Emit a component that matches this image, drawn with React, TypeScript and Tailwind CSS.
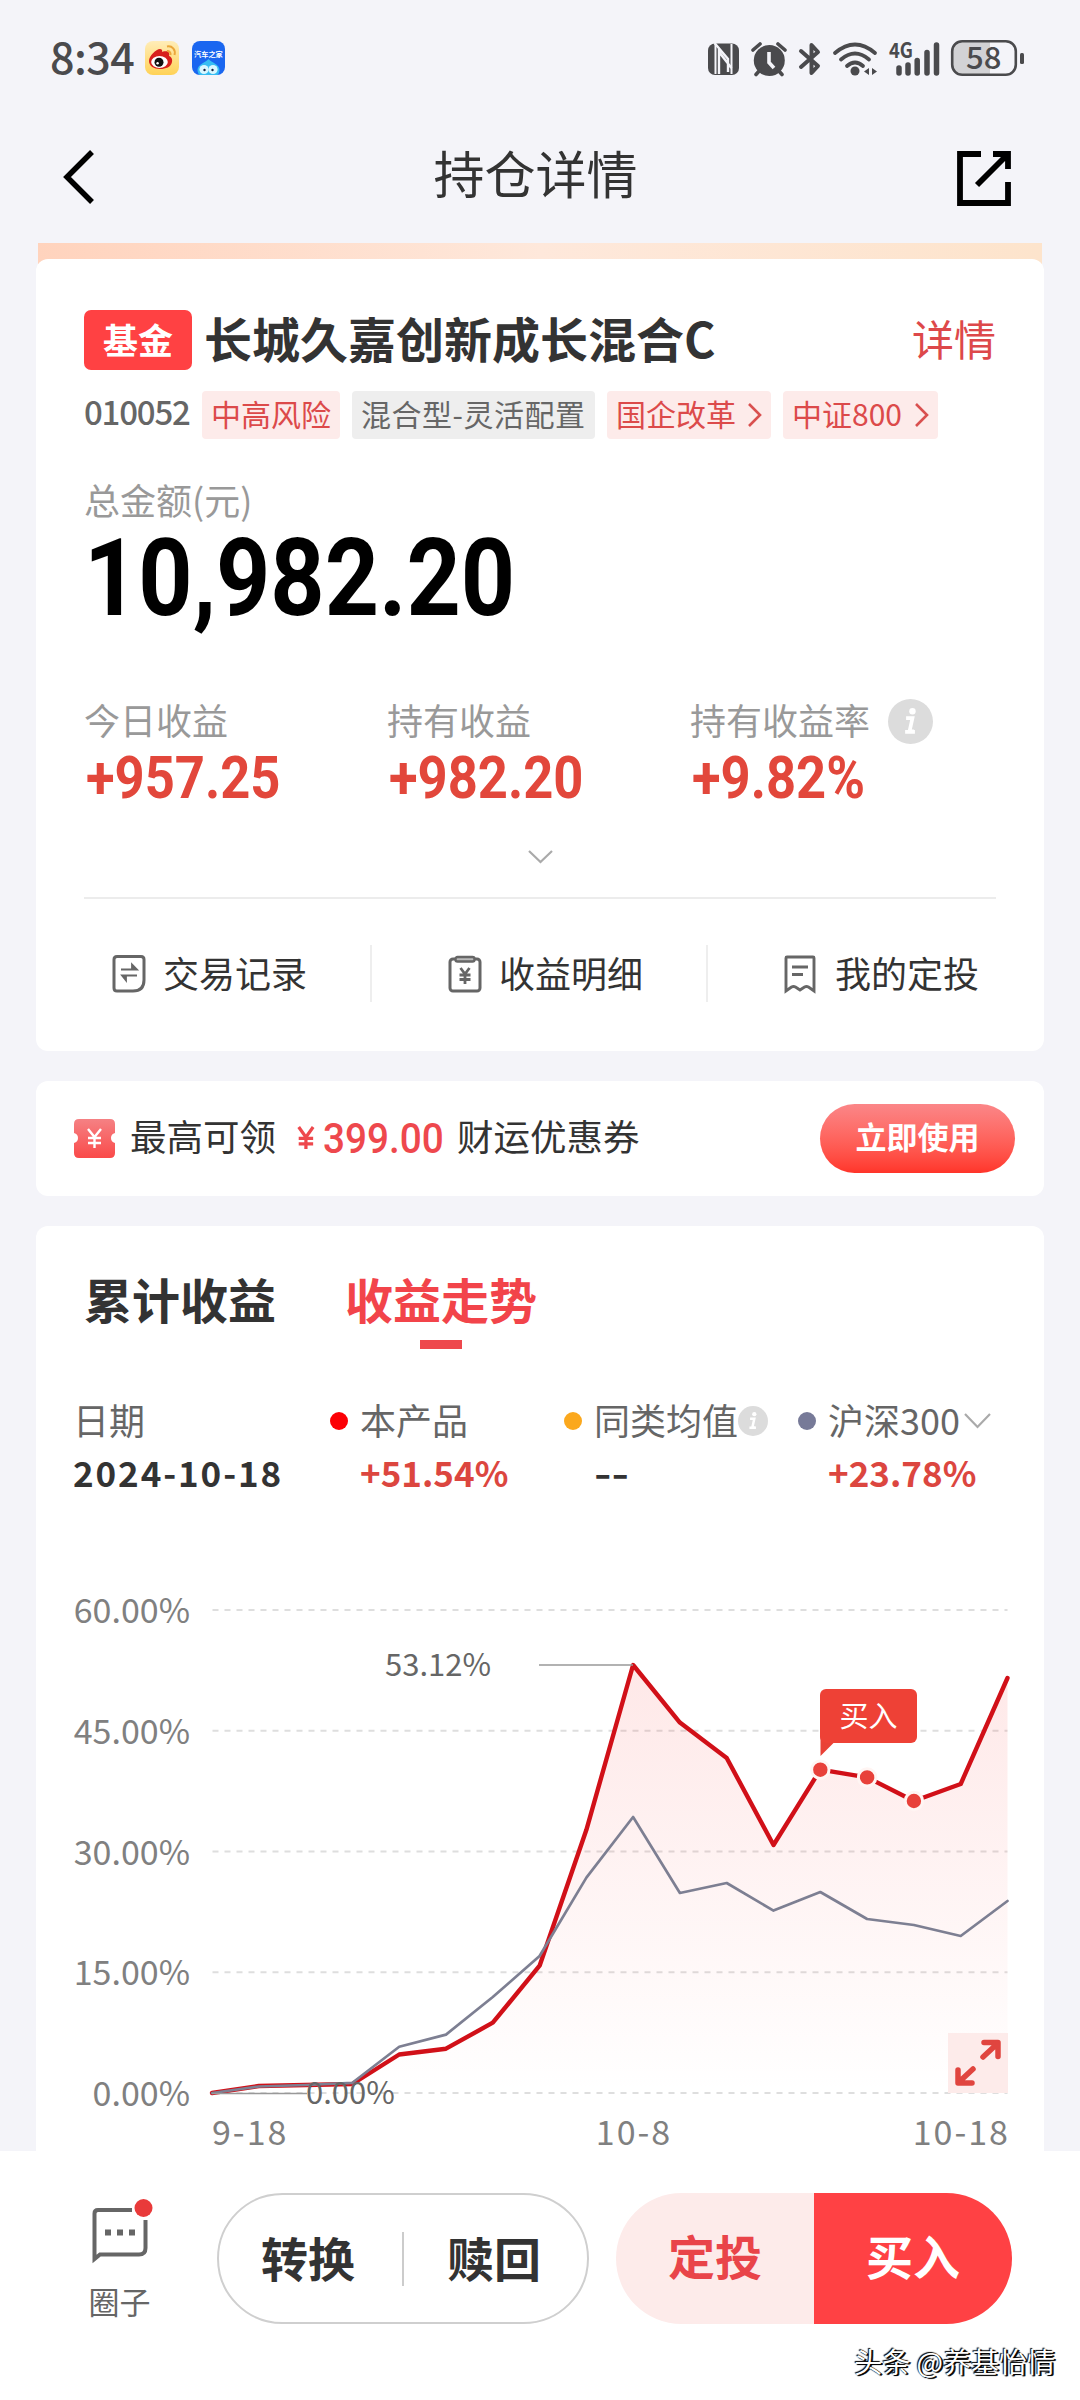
import React from "react";
import clsx from "clsx";

type Stat = { label: string; value: string; info?: boolean };

const STATS: Stat[] = [
	{ label: "今日收益", value: "+957.25" },
	{ label: "持有收益", value: "+982.20" },
	{ label: "持有收益率", value: "+9.82%", info: true },
];

// y pixel values inside the plot, 0 is the 60% line and 483 is the 0% line
const PRODUCT = [483, 476, 475, 474, 444.5, 438.7, 412.7, 355.7, 219.8, 55, 112.6, 148, 235, 159.7, 167.4, 191, 174, 68];
const INDEX = [483, 476.5, 475, 472.8, 436.8, 424.6, 387, 346, 267.6, 207, 283, 273, 300.6, 282, 309, 315, 326, 291];
const STEP = 795.5 / 17;
const TICKS = ["60.00%", "45.00%", "30.00%", "15.00%", "0.00%"];

const toPoints = (ys: number[]) => ys.map((y, i) => `${(i * STEP).toFixed(1)},${y}`).join(" ");

function Digits({ children, className }: { children: React.ReactNode; className?: string }) {
	return (
		<span className={clsx("block origin-left whitespace-nowrap font-['Roboto',sans-serif] leading-none", className)}>
			{children}
		</span>
	);
}

function InfoIcon({ size }: { size: number }) {
	return (
		<svg width={size} height={size} viewBox="0 0 46 46" className="shrink-0">
			<circle cx="23" cy="23" r="23" fill="#dcdcdc" />
			<circle cx="25" cy="12.500" r="3.300" fill="#fff" />
			<path d="M18.500 19.500h6.500l-3 13.500h4.500M17.500 33.500h10" fill="none" stroke="#fff" strokeWidth="3.800" />
		</svg>
	);
}

function StatusBar() {
	return (
		<div className="flex h-[116px] items-center pl-[50px] pr-[56px] text-[#4a4a4d]">
			<span className="mb-[6px] w-[95px] text-[43px] font-medium leading-none tracking-[-0.5px]">8:34</span>
			<svg width="34" height="34" viewBox="0 0 34 34">
				<defs>
					<linearGradient id="weibo" x1="0" y1="0" x2="0" y2="1">
						<stop offset="0" stopColor="#ffedb8" />
						<stop offset="1" stopColor="#ffd257" />
					</linearGradient>
				</defs>
				<rect width="34" height="34" rx="8" fill="url(#weibo)" />
				<path d="M15 8c3 0 2 3 2 3s6-2 7 1c.6 2 0 3 0 3s4 1 3 6-6 7-12 7S4 25 4 20 11 8 15 8Z" fill="#d7201c" />
				<ellipse cx="14.500" cy="21" rx="8.300" ry="6" fill="#fff" />
				<circle cx="14" cy="21.300" r="4.500" fill="#111" />
				<circle cx="12.600" cy="22.300" r="1.200" fill="#fff" />
				<path d="M22 5.500c5-1 9 3 7.500 8.500M22 10c2-.5 4 1.500 3.500 4" fill="none" stroke="#eba63a" strokeWidth="2" />
			</svg>
			<div className="relative ml-[13px] h-[34px] w-[33px] overflow-hidden rounded-[8px] bg-[#1a66f0]">
				<svg width="33" height="34" viewBox="0 0 33 34" className="absolute inset-0">
					<path d="M16.500 18c2 3 11 5 11 11 0 3-2 5-2 5h-18s-2-2-2-5c0-6 9-8 11-11Z" fill="#36bdf3" />
					<circle cx="12" cy="28.500" r="4.600" fill="#d9f7ff" />
					<circle cx="21" cy="28.500" r="4.600" fill="#d9f7ff" />
					<circle cx="12.500" cy="29" r="1.200" fill="#124" />
					<circle cx="20.500" cy="29" r="1.200" fill="#124" />
				</svg>
				<span className="absolute left-[2px] top-[10px] origin-top-left scale-[0.72] whitespace-nowrap text-[10px] font-bold leading-none text-white">
					汽车之家
				</span>
			</div>
			<svg width="317" height="44" viewBox="707 34 317 44" className="ml-auto overflow-visible">
				<g fill="#4a4a4d">
					<rect x="708" y="41.500" width="31" height="31.500" rx="7" />
					<path d="M715.500 42v30M731.500 42v30" stroke="#f4f4f9" strokeWidth="2" />
					<path d="M714.500 41l13.500 16v13M719 72V50l12.500 16" fill="none" stroke="#f4f4f9" strokeWidth="2.400" />
					<circle cx="769.300" cy="58.500" r="15.500" />
					<path d="M760 68l-4 4.500M778 68l4 4.500M753 48l7-6M785 48l-7-6" stroke="#4a4a4d" strokeWidth="3.600" strokeLinecap="round" />
					<path d="M769 50v10.500l5 5.500" fill="none" stroke="#f4f4f9" strokeWidth="3.600" />
					<path d="M801 49l17 15-6.500 7V43l6.500 7-17 15" fill="none" stroke="#4a4a4d" strokeWidth="4" strokeLinecap="round" strokeLinejoin="round" />
					<path d="M835 51q20-17 40 0M841 57.500q14-12 28 0M847 64q8-7 16 0" fill="none" stroke="#4a4a4d" strokeWidth="3.800" strokeLinecap="round" />
					<circle cx="855" cy="69" r="4.500" />
					<path d="M869 66v7l-5-3.500ZM872 66v7l5-3.500Z" />
					<path d="M899 66v5M908 63v8M917.200 58.500v12.500M927 50.500v20.500M936.500 43v28" stroke="#4a4a4d" strokeWidth="5.500" strokeLinecap="round" />
					<path d="M961 39.500h29v33h-29q-9 0-9-9v-15q0-9 9-9Z" fill="#d2d2d5" />
					<rect x="952.200" y="39.200" width="63.600" height="33.600" rx="10" fill="none" stroke="#4a4a4d" strokeWidth="2.600" />
					<rect x="1020" y="51" width="4" height="11" rx="1.500" />
				</g>
				<text x="889" y="56" fontSize="21" fontWeight="700" fill="#4a4a4d" textLength="24" lengthAdjust="spacingAndGlyphs">4G</text>
				<text x="966" y="67" fontSize="31" fontWeight="500" fill="#4a4a4d">58</text>
			</svg>
		</div>
	);
}

function Header() {
	return (
		<div className="flex h-[127px] items-start justify-between pl-[62px] pr-[69px]">
			<svg width="56" height="56" viewBox="0 0 56 56" className="mt-[33px]">
				<path d="M30 3L5 28l25 25" fill="none" stroke="#000" strokeWidth="5.500" />
			</svg>
			<h1 className="mr-1 mt-[31px] text-[51px] leading-none text-[#333]">持仓详情</h1>
			<svg width="54" height="56" viewBox="0 0 54 56" className="mt-[35px]">
				<path d="M24 3H3v49h48V31M36 3h15v15M50 4L20 34" fill="none" stroke="#000" strokeWidth="5.800" />
			</svg>
		</div>
	);
}

function Tag({ children, arrow, gray, className }: { children: React.ReactNode; arrow?: boolean; gray?: boolean; className?: string }) {
	return (
		<div
			className={clsx(
				"flex h-12 shrink-0 items-center justify-between whitespace-nowrap rounded-[4px] px-[9px] pb-[5px] text-[30px] leading-none",
				gray ? "bg-[#eeeeee] text-[#666]" : "bg-[#fdebea] text-[#dc4a4a]",
				className
			)}
		>
			<span>{children}</span>
			{arrow && (
				<svg width="15" height="24" viewBox="0 0 15 24" className="mt-1">
					<path d="M2 1l11 11L2 23" fill="none" stroke="#d9504f" strokeWidth="2.600" />
				</svg>
			)}
		</div>
	);
}

function RecordIcon() {
	return (
		<svg width="34" height="40" viewBox="0 0 34 40">
			<path d="M5 2.500h24q3 0 3 3V26q0 11-11 11H5q-3 0-3-3V5.500q0-3 3-3Z" fill="none" stroke="#666" strokeWidth="3" />
			<path d="M9 15.500h16l-5-5v5M25 21.500H10l4 5v-5" fill="#666" stroke="#666" strokeWidth="1.800" />
		</svg>
	);
}

function ClipboardIcon() {
	return (
		<svg width="34" height="40" viewBox="0 0 34 40">
			<rect x="2" y="5" width="30" height="32" rx="3" fill="none" stroke="#666" strokeWidth="3" />
			<rect x="7.500" y="3" width="19" height="4.500" rx="2" fill="#bbb" stroke="#666" strokeWidth="2.400" />
			<path d="M12.500 14l4.500 6 4.500-6M17 20v10M11.500 21h11M11.500 25.500h11" fill="none" stroke="#666" strokeWidth="2.800" />
		</svg>
	);
}

function BookmarkIcon() {
	return (
		<svg width="34" height="40" viewBox="0 0 34 40">
			<path d="M4 3h26q1 0 1 1v33l-5.500-4q-2-1-4 0L17 36l-4.500-3q-2-1-4 0L3 37V4q0-1 1-1Z" fill="none" stroke="#666" strokeWidth="2.900" />
			<path d="M9 13h16M9 20.500h11" stroke="#666" strokeWidth="2.800" />
		</svg>
	);
}

function Holding() {
	return (
		<section className="mx-9 h-[792px] rounded-[12px] bg-white pt-[51px]">
			<div className="flex h-[60px] items-center pl-12 pr-[48px]">
				<div className="flex h-[60px] w-[108px] items-center justify-center rounded-[7px] bg-[#ff4143] pb-1 text-[35px] font-bold leading-none text-white">
					基金
				</div>
				<h2 className="mb-[6px] ml-[12px] text-[48px] font-bold leading-none text-[#333]">长城久嘉创新成长混合C</h2>
				<span className="mb-1 ml-auto text-[42px] leading-none text-[#dd484a]">详情</span>
			</div>
			<div className="mt-[21px] flex h-12 items-center pl-12">
				<span className="mb-[7px] w-[118px] text-[33px] font-medium leading-none tracking-[-1.2px] text-[#666]">010052</span>
				<Tag className="w-[138px]">中高风险</Tag>
				<Tag gray className="ml-3 w-[243px] tracking-[0.5px]">混合型-灵活配置</Tag>
				<Tag arrow className="ml-3 w-[164px]">国企改革</Tag>
				<Tag arrow className="ml-3 w-[155px]">中证800</Tag>
			</div>
			<div className="mt-[42px] pl-12 text-[36px] leading-none text-[#999]">总金额(元)</div>
			<Digits className="ml-12 mt-[7px] scale-x-[0.877] text-[108px] font-bold text-black">10,982.20</Digits>
			<div className="mt-[66px] flex h-[118px] pl-12">
				{STATS.map((s) => (
					<div key={s.label} className="w-[303px] shrink-0">
						<div className="flex h-[46px] items-center text-[36px] leading-none text-[#999]">
							<span className="mb-1 mr-[18px]">{s.label}</span>
							{s.info && <InfoIcon size={45} />}
						</div>
						<Digits className="ml-[2px] mt-[4px] scale-x-[0.875] text-[60px] font-bold text-[#e2473b]">{s.value}</Digits>
					</div>
				))}
			</div>
			<div className="mx-12 flex h-[83px] items-center justify-center border-b-2 border-[#ececec]">
				<svg width="25" height="14" viewBox="0 0 25 14">
					<path d="M1 1l11.500 11L24 1" fill="none" stroke="#aaa" strokeWidth="2.200" />
				</svg>
			</div>
			<div className="mt-[46px] flex h-[57px] text-[36px] leading-none text-[#333]">
				<div className="flex w-[336px] items-center border-r-2 border-[#eee] pl-[76px]">
					<RecordIcon />
					<span className="mb-1 ml-[17px]">交易记录</span>
				</div>
				<div className="flex w-[336px] items-center border-r-2 border-[#eee] pl-[76px]">
					<ClipboardIcon />
					<span className="mb-1 ml-[17px]">收益明细</span>
				</div>
				<div className="flex w-[336px] items-center pl-[75px]">
					<BookmarkIcon />
					<span className="mb-1 ml-[18px]">我的定投</span>
				</div>
			</div>
		</section>
	);
}

function Coupon() {
	return (
		<section className="mx-9 mt-[30px] flex h-[115px] items-center rounded-[12px] bg-white pl-[38px] pr-[29px] text-[36.500px] leading-none text-[#333]">
			<svg width="41" height="39" viewBox="0 0 41 39">
				<defs>
					<linearGradient id="ticket" x1="0" y1="0" x2="0" y2="1">
						<stop offset="0" stopColor="#f58184" />
						<stop offset="1" stopColor="#fa4a49" />
					</linearGradient>
				</defs>
				<path d="M5 0h31q5 0 5 5v9q-4 1-4 5t4 5v10q0 5-5 5H5q-5 0-5-5V24q4-1 4-5t-4-5V5q0-5 5-5Z" fill="url(#ticket)" />
				<path d="M14 10l6.500 8 6.500-8M20.500 18v11M14 19h13M14 24h13" fill="none" stroke="#fff" strokeWidth="2.400" />
			</svg>
			<span className="mb-1 ml-[15px] w-[167px]">最高可领</span>
			<span className="mb-1 flex w-[160px] items-center whitespace-nowrap text-[#ee484d]">
				<svg width="21" height="28" viewBox="0 0 21 28" className="mr-[8px] mt-[2px]">
					<path d="M2 1l8.500 12L19 1M10.500 13v14M2 14.500h17M2 21h17" fill="none" stroke="#ee484d" strokeWidth="3.800" />
				</svg>
				<Digits className="mt-1 scale-x-[0.9] text-[43px] font-medium">399.00</Digits>
			</span>
			<span className="mb-1">财运优惠券</span>
			<button className="ml-auto flex h-[69px] w-[195px] items-center justify-center rounded-full bg-linear-to-b from-[#fb8688] to-[#ff3429] pb-[6px] text-[31px] font-bold leading-none text-white">
				立即使用
			</button>
		</section>
	);
}

function Legend({ color, name, value, className, children }: { color: string; name: string; value: string; className?: string; children?: React.ReactNode }) {
	return (
		<div className={clsx("shrink-0", className)}>
			<div className="flex h-9 items-center whitespace-nowrap text-[36px] leading-none text-[#666]">
				<span className={clsx("mr-[12px] h-[18px] w-[18px] shrink-0 rounded-full", color)} />
				<span className="mb-1">{name}</span>
				{children}
			</div>
			<div
				className={clsx(
					"ml-[30px] mt-[15px] origin-left whitespace-nowrap text-[35px] font-bold leading-none",
					value === "--" ? "w-8 scale-x-[1.35] text-[#333]" : "text-[#dc463f]"
				)}
			>
				{value}
			</div>
		</div>
	);
}

function Chart() {
	return (
		<div className="flex">
			<div className="flex w-[154px] shrink-0 flex-col items-end text-[34px] leading-none text-[#808080]">
				{TICKS.map((t) => (
					<div key={t} className="flex h-[120.75px] items-start">
						<span className="-mt-[18px]">{t}</span>
					</div>
				))}
			</div>
			<div className="ml-[22px] w-[796px]">
				<div className="relative h-[483px]">
					<svg width="796" height="483" viewBox="0 0 796 483" className="overflow-visible">
						<defs>
							<linearGradient id="area" gradientUnits="userSpaceOnUse" x1="0" y1="55" x2="0" y2="483">
								<stop offset="0" stopColor="#f9403c" stopOpacity=".12" />
								<stop offset="1" stopColor="#f9403c" stopOpacity="0" />
							</linearGradient>
						</defs>
						{TICKS.map((t, i) => (
							<path key={t} d={`M0.500 ${i * 120.75}H795.500`} stroke="#dedede" strokeWidth="2" strokeDasharray="6 6" />
						))}
						<polygon points={`${toPoints(PRODUCT)} 795.5,483 0,483`} fill="url(#area)" />
						<polyline points={toPoints(PRODUCT)} fill="none" stroke="#d11018" strokeWidth="4.400" strokeLinejoin="round" strokeLinecap="round" />
						<polyline points={toPoints(INDEX)} fill="none" stroke="#7d7f92" strokeWidth="2.700" strokeLinejoin="round" strokeLinecap="round" />
						<path d="M327 55h94M0 483.500h95" stroke="#999" strokeWidth="1.600" />
						{[13, 14, 15].map((i) => (
							<circle key={i} cx={i * STEP} cy={PRODUCT[i]} r="8.700" fill="#e8413a" stroke="#fff5f3" strokeWidth="3" />
						))}
						<path d="M608.500 125v21l13-13v-8Z" fill="#e94136" />
					</svg>
					<span className="absolute left-[173px] top-[37px] text-[31px] leading-none text-[#666]">53.12%</span>
					<span className="absolute left-[94px] top-[465px] text-[31px] leading-none text-[#666]">0.00%</span>
					<span className="absolute left-[608px] top-[79px] flex h-[54px] w-[97px] items-center justify-center rounded-[6px] bg-[#ee4136] pb-[3px] text-[29px] leading-none text-white">
						买入
					</span>
					<span className="absolute bottom-0 right-0 h-[60px] w-[60px] bg-[#fdebea]">
						<svg width="60" height="60" viewBox="0 0 60 60">
							<path d="M36 9.500h14v14M49 11L35 24M10 37v13h14M11 49l14-13" fill="none" stroke="#e0453f" strokeWidth="5.500" strokeLinecap="round" strokeLinejoin="round" />
						</svg>
					</span>
				</div>
				<div className="mt-[21px] flex justify-between text-[34px] leading-none tracking-[2px] text-[#808080]">
					<span className="w-[100px]">9-18</span>
					<span className="ml-[46px]">10-8</span>
					<span className="-mr-[2px] w-[100px] text-right">10-18</span>
				</div>
			</div>
		</div>
	);
}

function Trend() {
	return (
		<section className="mx-9 mt-[30px] h-[925px] rounded-t-[12px] bg-white">
			<div className="flex pl-12 pt-[48px] text-[48px] font-bold leading-none text-[#333]">
				<span>累计收益</span>
				<div className="ml-[69px] flex flex-col items-center text-[#f2444a]">
					<span>收益走势</span>
					<span className="mt-[18px] h-[9px] w-[42px] bg-[#ee484d]" />
				</div>
			</div>
			<div className="mt-[54px] flex h-[86px] pl-[37px]">
				<div className="w-[257px] shrink-0">
					<div className="flex h-9 items-center text-[36px] leading-none text-[#666]">
						<span className="mb-1">日期</span>
					</div>
					<div className="mt-[15px] text-[35px] font-bold leading-none tracking-[1.9px] text-[#333]">2024-10-18</div>
				</div>
				<Legend color="bg-[#fc0005]" name="本产品" value="+51.54%" className="w-[234px]" />
				<Legend color="bg-[#fba81d]" name="同类均值" value="--" className="w-[234px]">
					<InfoIcon size={30} />
				</Legend>
				<Legend color="bg-[#777a98]" name="沪深300" value="+23.78%">
					<svg width="27" height="16" viewBox="0 0 27 16" className="ml-[4px]">
						<path d="M1 1l12.500 13L26 1" fill="none" stroke="#aaa" strokeWidth="2.200" />
					</svg>
				</Legend>
			</div>
			<div className="mt-[121px]">
				<Chart />
			</div>
		</section>
	);
}

function ActionBar() {
	return (
		<footer className="flex h-[249px] bg-white pt-[42px]">
			<div className="ml-[88px] flex w-[63px] flex-col items-center text-[#666]">
				<svg width="64" height="72" viewBox="0 0 64 72" className="overflow-visible">
					<path d="M44 17H10q-3.500 0-3.500 3.500V66l5.500-4.500h39q6.500 0 6.500-6.500V27" fill="none" stroke="#666" strokeWidth="4" />
					<path d="M17 39.500h6M29 39.500h6M41 39.500h6" stroke="#666" strokeWidth="6" />
					<circle cx="55.500" cy="15" r="9" fill="#e93a3a" />
				</svg>
				<span className="mt-[20px] whitespace-nowrap text-[31px] leading-none">圈子</span>
			</div>
			<div className="ml-[66px] flex h-[131px] w-[372px] items-center rounded-full border-2 border-[#cfcfcf] pb-1 text-[47px] font-bold leading-none text-[#333]">
				<span className="w-[183px] pl-[42px]">转换</span>
				<span className="mt-1 h-[54px] w-[2px] bg-[#ccc]" />
				<span className="pl-[43px]">赎回</span>
			</div>
			<div className="ml-[27px] flex h-[131px] w-[396px] overflow-hidden rounded-full text-[47px] font-bold leading-none">
				<button className="w-1/2 bg-[#fdebea] pb-[9px] text-[#e94449]">定投</button>
				<button className="w-1/2 bg-[#ff4144] pb-[9px] text-white">买入</button>
			</div>
		</footer>
	);
}

export default function App() {
	return (
		<div className="relative h-[2400px] w-[1080px] overflow-hidden bg-[#f4f4f9] font-['Noto_Sans_CJK_SC',sans-serif]">
			<StatusBar />
			<Header />
			<div className="mx-[38px] h-[28px] bg-linear-to-r from-[#ffd3bd] via-[#fee8db] to-[#fde4cc]" />
			<div className="-mt-3">
				<Holding />
			</div>
			<Coupon />
			<Trend />
			<ActionBar />
			<span className="absolute bottom-[25px] right-[25px] whitespace-nowrap text-[28px] leading-none text-white [text-shadow:-1px_-1px_1px_#000,1px_1px_1px_#000,2px_1px_0_#222]">
				头条 @养基怡情
			</span>
		</div>
	);
}
